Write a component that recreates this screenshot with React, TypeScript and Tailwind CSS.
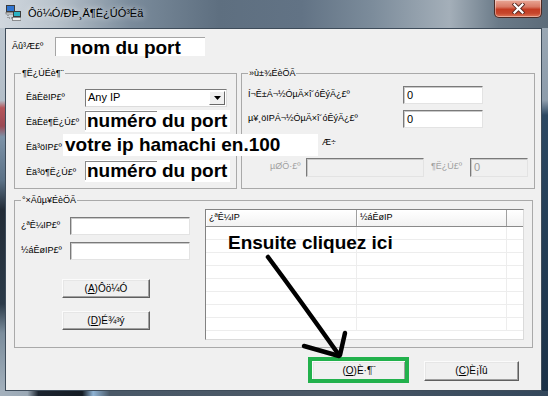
import React from 'react';

// champs "creusés" façon Windows classique
const TextBox: React.FC<{ className?: string; disabled?: boolean; children?: React.ReactNode }> = ({ className = '', disabled, children }) => (
  <div
    className={`flex items-center pl-[3px] text-[11px] leading-none border border-t-[#7a7a7a] border-l-[#7a7a7a] border-r-[#e3e3e3] border-b-[#e3e3e3] shadow-[inset_1px_1px_0_#c9c9c9] ${disabled ? 'bg-[#f0f0f0] text-[#9a9a9a]' : 'bg-white text-black'} ${className}`}
  >
    {children}
  </div>
);

const Btn: React.FC<{ k: string; label: string; className?: string }> = ({ k, label, className = '' }) => (
  <div
    className={`flex items-center justify-center text-[10px] leading-none text-black bg-[#f0f0f0] border border-t-[#fbfbfb] border-l-[#fbfbfb] border-r-[#5f5f5f] border-b-[#5f5f5f] shadow-[inset_-1px_-1px_0_#a0a0a0,inset_1px_1px_0_#e6e6e6] ${className}`}
  >
    (<span className="underline">{k}</span>){label}
  </div>
);

const Legend: React.FC<{ text: string }> = ({ text }) => (
  <legend className="px-[1px] text-[9px] leading-[12px] text-black">{text}</legend>
);

// boîte blanche collée par-dessus un champ (annotation)
const PortNote: React.FC = () => (
  <div className="relative w-[145px] h-[22px] bg-white">
    <span className="absolute left-0 top-[1px] w-[72px] h-[19px] border-t border-l border-[#8a8a8a]" />
    <span className="relative pl-[2px] font-bold text-[19px] leading-[22px] text-black whitespace-nowrap">numéro du port</span>
  </div>
);

const rows = [0, 1, 2, 3, 4, 5, 6, 7];

const App: React.FC = () => {
  return (
    <div className="relative w-[548px] h-[396px] overflow-hidden flex flex-col bg-[#5b6c7c] font-['Liberation_Sans',Arial,sans-serif] text-black">
      {/* barre de titre */}
      <div className="h-[28px] flex items-start bg-[linear-gradient(90deg,#d0d7de_0%,#b9c3cc_10%,#7a8b9b_24%,#5e6f80_40%,#627385_55%,#7c8c9b_68%,#a4afb9_82%,#6a7a88_91%,#5c6b79_100%)]">
        <svg className="mt-[5px] ml-[5px]" width="16" height="16" viewBox="0 0 16 16">
          <rect x="1.5" y="0.5" width="8" height="6" fill="#2f74d0" stroke="#3b3b3b" />
          <rect x="1" y="7.5" width="9" height="1.5" fill="#e8e8e8" stroke="#555" strokeWidth="0.6" />
          <path d="M3 10v3h4" stroke="#666" strokeWidth="1" fill="none" strokeDasharray="1 1" />
          <rect x="8.5" y="6.5" width="7" height="5" fill="#2cb2c4" stroke="#3b3b3b" />
          <rect x="7.5" y="12.5" width="8.5" height="3" fill="#f2f2f2" stroke="#555" strokeWidth="0.6" />
        </svg>
        <span className="ml-[7px] mt-[6px] text-[11px] leading-[14px] text-black [text-shadow:0_0_6px_rgba(255,255,255,0.9)]">
          Ôö¼Ó/ÐÞ¸Ä¶Ë¿ÚÓ³Éä
        </span>
        <div className="ml-auto mr-[6px] w-[48px] h-[18px] flex items-center justify-center rounded-b-[5px] border border-t-0 border-[#4a2a24] bg-[linear-gradient(180deg,#e9a897_0%,#d97a65_40%,#c43c22_55%,#c6462c_78%,#df7758_100%)] shadow-[inset_0_0_0_1px_rgba(255,255,255,0.4)]">
          <svg width="13" height="11" viewBox="0 0 13 11">
            <path d="M2.5 1.5L10.5 9.5M10.5 1.5L2.5 9.5" stroke="#5a2a22" strokeWidth="4" strokeLinecap="square" />
            <path d="M2.5 1.5L10.5 9.5M10.5 1.5L2.5 9.5" stroke="#ffffff" strokeWidth="2.2" strokeLinecap="square" />
          </svg>
        </div>
      </div>

      <div className="flex h-[363px]">
        {/* cadre gauche */}
        <div className="w-[5px] bg-[linear-gradient(180deg,#bcc6cf_0%,#b3bec8_20%,#b5565b_22%,#9b4a55_27%,#7d93a8_30%,#5b7186_42%,#222b36_50%,#2b3a48_76%,#7b8d9c_84%,#a3b0bc_100%)]" />

        {/* zone cliente */}
        <div className="w-[537px] border border-[#3e4c5a] bg-[#f0f0f0] flex flex-col">
          {/* nom */}
          <div className="mt-[8px] pl-[6px] flex items-center h-[19px]">
            <span className="w-[43px] text-[9px]">Ãû³Æ£º</span>
            <div className="w-[150px] h-[19px] bg-white border-t border-l border-[#a5a5a5] pl-[14px] font-bold text-[19px] leading-[19px] whitespace-nowrap">
              nom du port
            </div>
          </div>

          <div className="mt-[11px] px-[8px] flex flex-col">
            <div className="flex gap-[4px]">
              {/* réglage des ports */}
              <fieldset className="w-[220px] border border-[#a9a9a9] px-[6px] pt-[6px] pb-[3px]">
                <Legend text="¶Ë¿ÚÉè¶¨" />
                <div className="pl-[5px] flex flex-col text-[9px]">
                  <div className="h-[25px] flex items-center">
                    <span className="w-[59px]">ÊäÈëIP£º</span>
                    <div className="w-[142px] h-[18px] flex items-center bg-white border border-t-[#7a7a7a] border-l-[#7a7a7a] border-r-[#dcdcdc] border-b-[#dcdcdc]">
                      <span className="flex-1 pl-[2px] text-[11px]">Any IP</span>
                      <div className="w-[16px] h-[14px] mr-[1px] flex items-center justify-center bg-[#f0f0f0] border border-t-white border-l-white border-r-[#696969] border-b-[#696969]">
                        <svg width="7" height="4" viewBox="0 0 7 4">
                          <path d="M0 0h7L3.5 4z" fill="#000" />
                        </svg>
                      </div>
                    </div>
                  </div>
                  <div className="h-[25px] flex items-start">
                    <span className="w-[59px] self-center">ÊäÈë¶Ë¿Ú£º</span>
                    <PortNote />
                  </div>
                  <div className="relative h-[25px] flex items-center">
                    <span className="w-[59px]">Êä³öIP£º</span>
                    <div className="absolute left-[37px] -top-[1px] z-10 w-[255px] h-[22px] bg-white pl-[2px] font-bold text-[19px] leading-[22px] whitespace-nowrap">
                      votre ip hamachi en.100
                    </div>
                  </div>
                  <div className="h-[25px] flex items-start">
                    <span className="w-[59px] self-center">Êä³ö¶Ë¿Ú£º</span>
                    <PortNote />
                  </div>
                </div>
              </fieldset>

              {/* réglages de base */}
              <fieldset className="flex-1 border border-[#a9a9a9] px-[6px] pt-[4px] pb-[3px]">
                <Legend text="»ù±¾ÉèÖÃ" />
                <div className="flex flex-col text-[9px]">
                  <div className="h-[24px] flex items-center">
                    <span className="w-[155px] whitespace-nowrap">Í¬Ê±Á¬½ÓµÄ×î´óÊýÄ¿£º</span>
                    <TextBox className="w-[80px] h-[18px]">0</TextBox>
                  </div>
                  <div className="h-[24px] flex items-center">
                    <span className="w-[155px] whitespace-nowrap">µ¥¸öIPÁ¬½ÓµÄ×î´óÊýÄ¿£º</span>
                    <TextBox className="w-[80px] h-[18px]">0</TextBox>
                  </div>
                  <div className="h-[24px] flex items-center pl-[74px]">
                    <span>Æ÷</span>
                  </div>
                  <div className="h-[24px] flex items-center pl-[22px] text-[#a0a0a0]">
                    <span className="w-[36px]">µØÖ·£º</span>
                    <TextBox disabled className="w-[118px] h-[19px]" />
                    <span className="ml-[7px] w-[39px]">¶Ë¿Ú£º</span>
                    <TextBox disabled className="w-[58px] h-[19px]">0</TextBox>
                  </div>
                </div>
              </fieldset>
            </div>

            {/* liste blanche */}
            <fieldset className="mt-[5px] border border-[#a9a9a9] px-[6px] pt-[3px] pb-[7px]">
              <Legend text="°×Ãûµ¥ÉèÖÃ" />
              <div className="flex">
                <div className="w-[184px] flex flex-col pt-[8px] text-[9px]">
                  <div className="h-[18px] flex items-center">
                    <span className="w-[49px]">¿ªÊ¼IP£º</span>
                    <TextBox className="w-[120px] h-[18px]" />
                  </div>
                  <div className="mt-[7px] h-[18px] flex items-center">
                    <span className="w-[49px]">½áÊøIP£º</span>
                    <TextBox className="w-[120px] h-[18px]" />
                  </div>
                  <Btn k="A" label="Ôö¼Ó" className="mt-[19px] ml-[41px] w-[88px] h-[19px]" />
                  <Btn k="D" label="É¾³ý" className="mt-[13px] ml-[41px] w-[88px] h-[19px]" />
                </div>

                <div className="flex-1 mr-[2px] h-[131px] bg-white border border-t-[#828282] border-l-[#828282] border-r-[#dadada] border-b-[#dadada] flex flex-col overflow-hidden">
                  <div className="h-[17px] flex text-[9px] bg-[linear-gradient(180deg,#ffffff,#f2f2f2)] border-b border-[#8a8a8a]">
                    <div className="w-[151px] pl-[3px] flex items-center border-r border-[#a0a0a0] shadow-[inset_1px_1px_0_#ffffff]">¿ªÊ¼IP</div>
                    <div className="w-[150px] pl-[3px] flex items-center border-r border-[#a0a0a0] shadow-[inset_1px_1px_0_#ffffff]">½áÊøIP</div>
                    <div className="flex-1" />
                  </div>
                  {rows.map((r) => (
                    <div key={r} className="h-[13px] shrink-0 flex border-b border-[#ededed]">
                      <div className="w-[151px] border-r border-[#ededed]" />
                      <div className="w-[150px] border-r border-[#ededed]" />
                      <div className="flex-1" />
                    </div>
                  ))}
                </div>
              </div>
            </fieldset>
          </div>

          {/* boutons */}
          <div className="mt-[13px] flex justify-end gap-[18px] pr-[22px]">
            <div className="relative">
              <Btn k="O" label="È·¶¨" className="w-[94px] h-[20px]" />
              <span className="absolute -left-[4px] -top-[4px] w-[101px] h-[26px] border-4 border-[#22b14c]" />
            </div>
            <Btn k="C" label="È¡Ïû" className="w-[95px] h-[20px]" />
          </div>
        </div>

        {/* cadre droit */}
        <div className="w-[6px] bg-[linear-gradient(180deg,#9aa7b3_0%,#8d9cab_20%,#2c4862_24%,#233d55_60%,#1b3147_100%)]" />
      </div>

      {/* cadre bas */}
      <div className="h-[5px] bg-[linear-gradient(90deg,#a4b1bd_0%,#9aa8b5_5%,#1c2530_7%,#151c24_15%,#8fb3d4_17%,#4a5968_20%,#4b5866_60%,#33475b_100%)]" />

      {/* annotations */}
      <div className="absolute left-[228px] top-[233px] font-bold text-[19px] leading-[19px] whitespace-nowrap">Ensuite cliquez ici</div>
      <svg className="absolute inset-0 pointer-events-none" width="548" height="396" viewBox="0 0 548 396">
        <g stroke="#000" strokeWidth="4.5" strokeLinecap="round" fill="none">
          <path d="M268 257 Q300 300 339 355" />
          <path d="M304 346 L339 356" />
          <path d="M345 333 L340 355" />
        </g>
      </svg>
    </div>
  );
};

export default App;
